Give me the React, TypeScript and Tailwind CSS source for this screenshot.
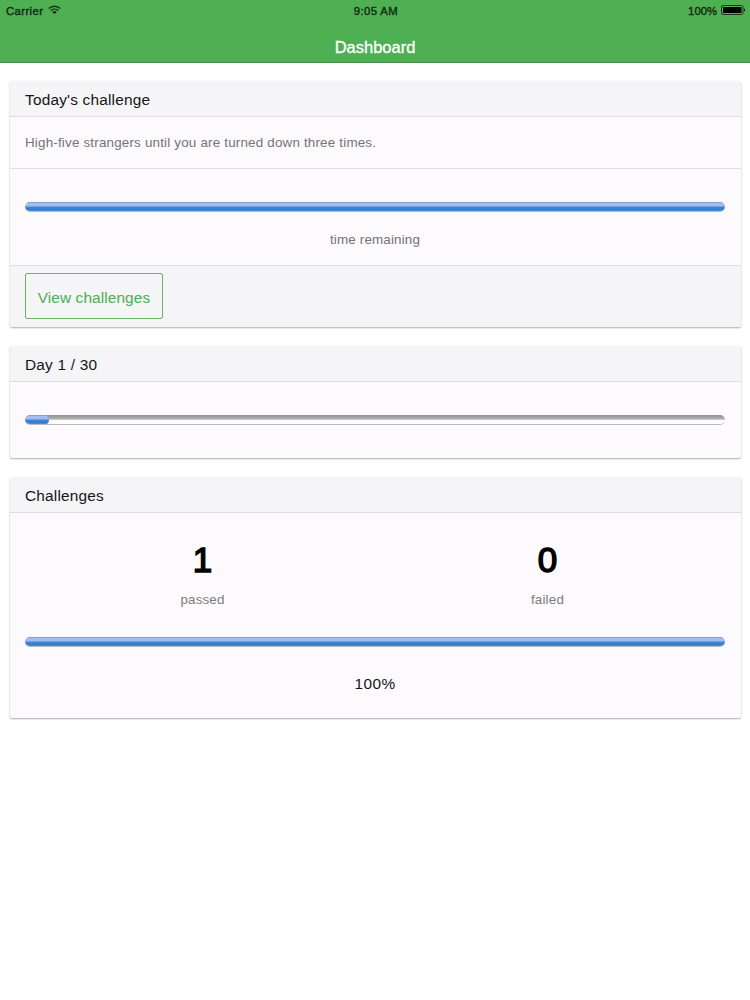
import type { ReactNode } from 'react';

type BarProps = {
  value: number;
};

function ProgressBar({ value }: BarProps) {
  return (
    <div className="h-[10px] w-full rounded-full overflow-hidden border-b border-[#b9b9bc] bg-linear-to-b from-[#8e8e90] from-0% via-[#b4b4b6] via-48% to-white to-55%">
      <div
        style={{ width: `${value}%` }}
        className="h-[10px] min-w-[24px] rounded-full bg-[linear-gradient(#7d93bb_0%,#a4bdec_15%,#9dbef2_38%,#4484da_52%,#3579d2_78%,#6fa9ee_100%)]"
      />
    </div>
  );
}

type CardProps = {
  title: string;
  children: ReactNode;
};

function Card({ title, children }: CardProps) {
  return (
    <section className="mx-[9.5px] rounded-[2px] overflow-hidden bg-[#fcfafd] shadow-[0_1px_2px_rgba(0,0,0,0.32)]">
      <h2 className="h-[36px] pt-[2px] px-[15.5px] flex items-center border-b border-[#dddcde] bg-[#f5f4f6] text-[15.4px] tracking-[0.2px] text-[#161616]">
        {title}
      </h2>
      {children}
    </section>
  );
}

type StatProps = {
  value: number;
  label: string;
};

function Stat({ value, label }: StatProps) {
  return (
    <div className="flex-1 text-center">
      <div className="text-[35px] leading-[40px] text-black [-webkit-text-stroke:1.5px_black]">{value}</div>
      <div className="mt-[10px] text-[13.4px] leading-5 tracking-[0.17px] text-[#7c7b7e]">{label}</div>
    </div>
  );
}

function WifiIcon() {
  return (
    <svg width="13" height="10" viewBox="0 0 13 10" fill="none" stroke="#102c12" strokeWidth="1.4">
      <path d="M0.7 3.5C4 0.4 9 0.4 12.3 3.5" />
      <path d="M2.7 5.6C4.9 3.6 8.1 3.6 10.3 5.6" />
      <path d="M6.5 9L4.3 6.9C5.6 5.8 7.4 5.8 8.7 6.9Z" fill="#102c12" stroke="none" />
    </svg>
  );
}

function BatteryIcon() {
  return (
    <svg width="25" height="10" viewBox="0 0 25 10">
      <rect x="0.5" y="0.5" width="21.5" height="9" rx="1.6" fill="none" stroke="#173a19" />
      <rect x="2" y="2" width="18.5" height="6" rx="0.6" fill="#000" />
      <path d="M23 3.2C24.6 3.6 24.6 6.4 23 6.8Z" fill="#102c12" />
    </svg>
  );
}

export default function App() {
  return (
    <div className="min-h-screen bg-white font-['Liberation_Sans',Arial,sans-serif]">
      <header className="h-[63px] bg-[#4eb052] border-b border-[#458c48]">
        <div className="h-5 pl-[6px] pr-1 grid grid-cols-3 items-center text-[11.3px] text-[#102c12] [-webkit-text-stroke:0.4px_#102c12]">
          <div className="flex items-center gap-[5px] tracking-[0.4px]">
            <span className="pt-[2px]">Carrier</span>
            <WifiIcon />
          </div>
          <div className="pt-[2px] text-center tracking-[0.4px]">9:05 AM</div>
          <div className="flex items-center justify-end gap-1">
            <span className="pt-[2px]">100%</span>
            <BatteryIcon />
          </div>
        </div>
        <h1 className="pt-[15px] text-center text-[16.5px] leading-6 text-white [-webkit-text-stroke:0.3px_white]">Dashboard</h1>
      </header>

      <main className="pt-[18px] flex flex-col gap-[19px]">
        <Card title="Today's challenge">
          <p className="h-[52px] pt-[2px] px-[15.5px] flex items-center border-b border-[#e0dfe1] text-[13.4px] tracking-[0.19px] text-[#747376]">
            High-five strangers until you are turned down three times.
          </p>
          <div className="h-[96px] px-[15.5px] pt-[33px]">
            <ProgressBar value={100} />
            <div className="mt-[18px] text-center text-[13.4px] leading-5 tracking-[0.17px] text-[#747376]">time remaining</div>
          </div>
          <div className="h-[62px] px-[15.5px] pt-[7px] border-t border-[#dddcde] bg-[#f5f4f6]">
            <button className="w-[138px] h-[46px] pt-[3px] rounded-[2px] border border-[#66b66a] text-[15.4px] tracking-[0.1px] text-[#4eae53]">
              View challenges
            </button>
          </div>
        </Card>

        <Card title="Day 1 / 30">
          <div className="h-[76px] px-[15.5px] pt-[33px]">
            <ProgressBar value={(1 / 30) * 100} />
          </div>
        </Card>

        <Card title="Challenges">
          <div className="h-[205px] px-[15.5px] pt-[27px]">
            <div className="flex px-[5px]">
              <Stat value={1} label="passed" />
              <Stat value={0} label="failed" />
            </div>
            <div className="mt-[27px]">
              <ProgressBar value={100} />
            </div>
            <div className="mt-[27px] text-center text-[15.4px] leading-5 tracking-[0.4px] text-[#161616]">100%</div>
          </div>
        </Card>
      </main>
    </div>
  );
}
